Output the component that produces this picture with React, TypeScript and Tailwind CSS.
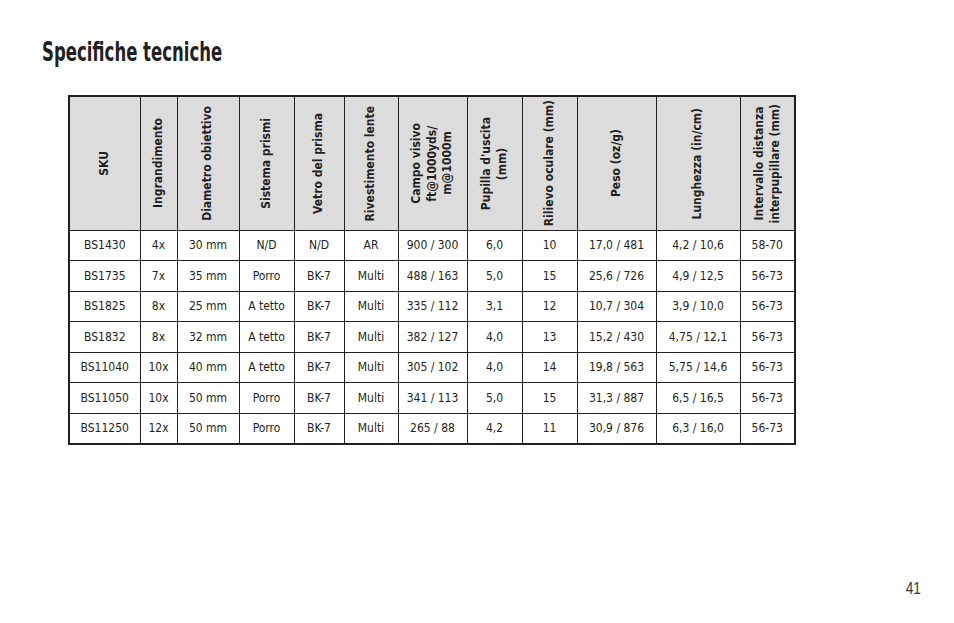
import React from 'react';

const FONT = "font-['Liberation_Sans_Narrow','DejaVu_Sans_Condensed',sans-serif]";

const COLUMNS: { label: string[]; width: string }[] = [
  { label: ['SKU'], width: 'w-[71px]' },
  { label: ['Ingrandimento'], width: 'w-[37px]' },
  { label: ['Diametro obiettivo'], width: 'w-[62px]' },
  { label: ['Sistema prismi'], width: 'w-[55px]' },
  { label: ['Vetro del prisma'], width: 'w-[50px]' },
  { label: ['Rivestimento lente'], width: 'w-[54px]' },
  { label: ['Campo visivo', 'ft@1000yds/', 'm@1000m'], width: 'w-[69px]' },
  { label: ["Pupilla d'uscita", '(mm)'], width: 'w-[55px]' },
  { label: ['Rilievo oculare (mm)'], width: 'w-[55px]' },
  { label: ['Peso (oz/g)'], width: 'w-[79px]' },
  { label: ['Lunghezza (in/cm)'], width: 'w-[84px]' },
  { label: ['Intervallo distanza', 'interpupillare (mm)'], width: 'w-[55px]' },
];

const ROWS: string[][] = [
  ['BS1430', '4x', '30 mm', 'N/D', 'N/D', 'AR', '900 / 300', '6,0', '10', '17,0 / 481', '4,2 / 10,6', '58-70'],
  ['BS1735', '7x', '35 mm', 'Porro', 'BK-7', 'Multi', '488 / 163', '5,0', '15', '25,6 / 726', '4,9 / 12,5', '56-73'],
  ['BS1825', '8x', '25 mm', 'A tetto', 'BK-7', 'Multi', '335 / 112', '3,1', '12', '10,7 / 304', '3,9 / 10,0', '56-73'],
  ['BS1832', '8x', '32 mm', 'A tetto', 'BK-7', 'Multi', '382 / 127', '4,0', '13', '15,2 / 430', '4,75 / 12,1', '56-73'],
  ['BS11040', '10x', '40 mm', 'A tetto', 'BK-7', 'Multi', '305 / 102', '4,0', '14', '19,8 / 563', '5,75 / 14,6', '56-73'],
  ['BS11050', '10x', '50 mm', 'Porro', 'BK-7', 'Multi', '341 / 113', '5,0', '15', '31,3 / 887', '6,5 / 16,5', '56-73'],
  ['BS11250', '12x', '50 mm', 'Porro', 'BK-7', 'Multi', '265 / 88', '4,2', '11', '30,9 / 876', '6,3 / 16,0', '56-73'],
];

export default function App() {
  return (
    <div className={`${FONT} relative w-[954px] h-[623px] bg-white text-[#231f20] flex flex-col`}>
      {/* Title */}
      <h1 className="pl-[42px] pt-[36px] text-[27px] leading-[32px] font-bold">
        <span className="inline-block origin-left scale-x-[0.68] whitespace-nowrap">Specifiche tecniche</span>
      </h1>

      {/* Spec table */}
      <div className="pl-[68px] pt-[27px]">
        <table className="table-fixed border-collapse border-[2.5px] border-[#231f20] w-[727px]">
          <thead>
            <tr className="h-[134px] bg-[#dcdcdc]">
              {COLUMNS.map((col) => (
                <th
                  key={col.label.join(' ')}
                  className={`${col.width} border-[1.5px] border-[#231f20] p-0 align-middle`}
                >
                  <div className="flex justify-center items-center">
                    <span className="[writing-mode:vertical-rl] rotate-180 text-center text-[12px] leading-[15.5px] font-bold whitespace-nowrap">
                      {col.label.map((line, i) => (
                        <React.Fragment key={line}>
                          {i > 0 && <br />}
                          {line}
                        </React.Fragment>
                      ))}
                    </span>
                  </div>
                </th>
              ))}
            </tr>
          </thead>
          <tbody>
            {ROWS.map((row) => (
              <tr key={row[0]} className="h-[30.5px]">
                {row.map((cell, i) => (
                  <td
                    key={i}
                    className="border-[1.5px] border-[#231f20] p-0 text-center align-middle text-[12px] leading-none whitespace-nowrap"
                  >
                    {cell}
                  </td>
                ))}
              </tr>
            ))}
          </tbody>
        </table>
      </div>

      {/* Page number */}
      <div className="mt-auto flex justify-end pr-[33px] pb-[26px]">
        <span className="inline-block origin-right scale-x-[0.8] font-['Liberation_Sans',sans-serif] text-[17px] leading-none text-[#333]">
          41
        </span>
      </div>
    </div>
  );
}
